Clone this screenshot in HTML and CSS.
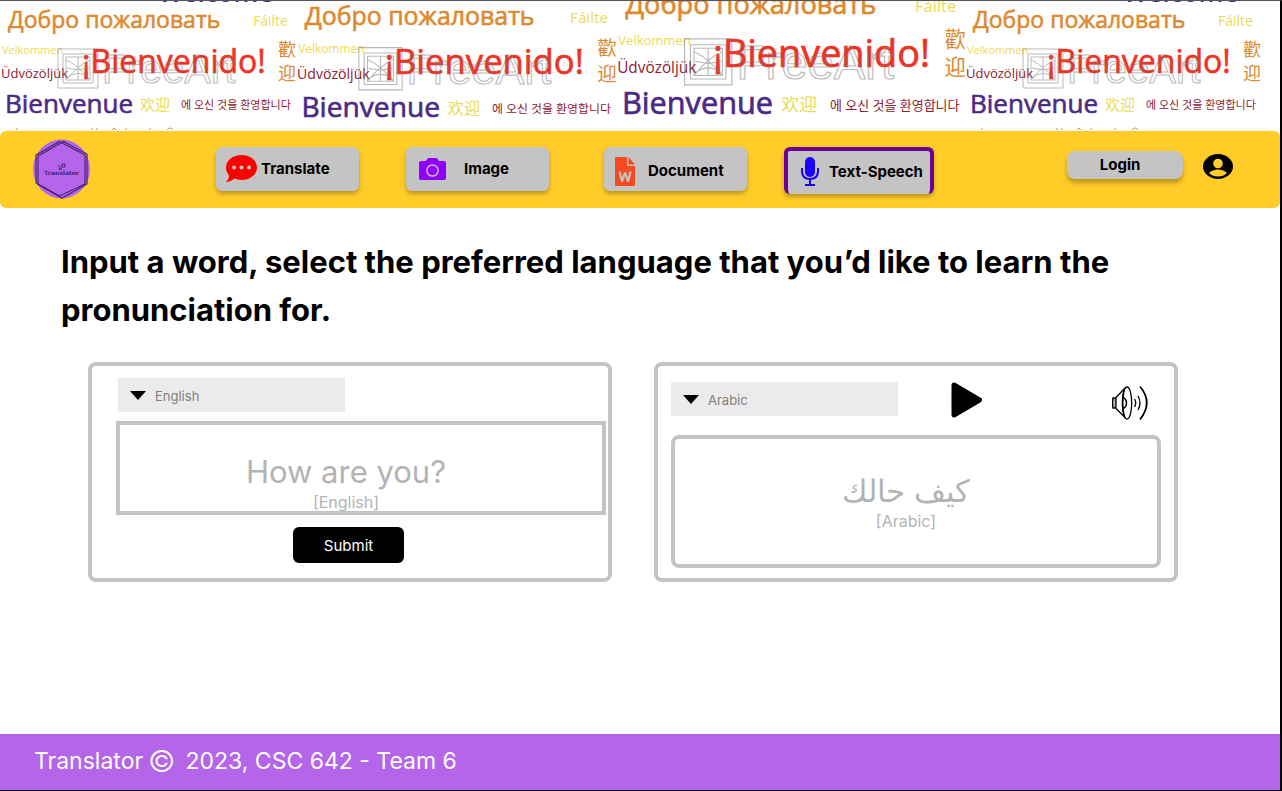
FILE: index.html
```html
<!DOCTYPE html>
<html lang="en">
<head>
<meta charset="utf-8">
<title>Translator - Text-Speech</title>
<link rel="stylesheet" href="styles.css">
<script src="banner.js" defer></script>
</head>
<body>
<div class="page">
  <div class="banner" aria-label="Welcome in many languages">
    <svg class="tile tile-a" viewBox="0 1 296 130" preserveAspectRatio="xMinYMin slice"></svg>
    <svg class="tile tile-b" viewBox="0 6 296 120" preserveAspectRatio="xMinYMin slice"></svg>
    <svg class="tile tile-c" viewBox="0 17 296 110" preserveAspectRatio="xMinYMin slice"></svg>
    <svg class="tile tile-d" viewBox="0 1 315 130" preserveAspectRatio="xMinYMin slice"></svg>
  </div>
  <template id="greetings">
    <svg>
      <text class="g purple strong" x="158" y="2" font-size="26">Welcome</text>
      <text class="g orange medium" x="8" y="28" font-size="23">Добро пожаловать</text>
      <text class="g yellow" x="253" y="26" font-size="14">Fáilte</text>
      <text class="g yellow" x="2" y="54" font-size="11">Velkommen</text>
      <text class="g maroon" x="1" y="78" font-size="13">Üdvözöljük</text>
      <text class="g red medium" x="82" y="73" font-size="32">¡Bienvenido!</text>
      <text class="g orange" x="278" y="56" font-size="18">歡</text>
      <text class="g orange" x="278" y="80" font-size="18">迎</text>
      <text class="g purple medium" x="5" y="113" font-size="26">Bienvenue</text>
      <text class="g yellow" x="140" y="110" font-size="15">欢迎</text>
      <text class="g maroon" x="181" y="109" font-size="11">에 오신 것을 환영합니다</text>
      <g class="mark">
        <path d="M58 49h40v39h-40zM63 54h30v29H63zM66 57h24v23H66z"/>
        <path d="M66 60q12 5 24 20M90 60Q78 65 66 80M67 68l11 2 11-2M78 57v23M68 77q10-7 20 0"/>
        <text x="102" y="83" font-size="40">FreeArt</text>
      </g>
      <path class="sliver" d="M16 129h2M91 129h2M96 129h2M112 130l2-2 2 2M127 128l-2 2M151 128l-2 2M167 130q4-4 6 0"/>
    </svg>
  </template>

  <header class="nav">
    <a class="logo" href="#" aria-label="Translator home">
      <svg width="58" height="60" viewBox="0 0 58 60">
        <ellipse cx="29.500" cy="30" rx="28.500" ry="29.500" fill="#b465ea"/>
        <g fill="none" stroke="#43206b" stroke-width="1.100">
          <path d="M27.500 2.500L53 16v29L27.500 57 4 44V16z"/>
          <path d="M31.500 2.500L55 15v30L30 59 6 45.500V17z"/>
        </g>
        <path d="M30 25h3v3h-3zM29 28l-2 3M26 27h2M27 30h3" stroke="#43206b" fill="none"/>
        <text x="29.500" y="36" font-size="6" font-weight="700" text-anchor="middle" font-family="DejaVu Serif, serif" fill="#43206b">Translator</text>
      </svg>
    </a>
    <nav class="tabs">
      <button class="tab translate">
        <svg width="31" height="28" viewBox="0 0 31 28"><path fill="#f00" d="M15.500 0C24 0 31 5.300 31 12.500S24 25 15.500 25c-2.500 0-5-.5-7-1.400C6 26 3 27 0 27c2-2 3-4 3-6.500C1 18 0 15.500 0 12.500 0 5.300 7 0 15.500 0z"/><g fill="#c4c4c4"><circle cx="8" cy="12.500" r="2"/><circle cx="15.500" cy="12.500" r="2"/><circle cx="23" cy="12.500" r="2"/></g></svg>
        <span>Translate</span>
      </button>
      <button class="tab image">
        <svg width="27" height="22" viewBox="0 0 27 22"><path fill="#9100ff" d="M2 3h5l1.500-2.200Q9 0 10 0h7q1 0 1.500.8L20 3h5q2 0 2 2v15q0 2-2 2H2q-2 0-2-2V5q0-2 2-2z"/><circle cx="13.500" cy="12.500" r="5.600" fill="none" stroke="#c4c4c4" stroke-width="1.500"/></svg>
        <span>Image</span>
      </button>
      <button class="tab document">
        <svg width="20" height="29" viewBox="0 0 20 29"><path fill="#f84a20" d="M1 0h11v8q0 1 1 1h7v19q0 1-1 1H1q-1 0-1-1V1q0-1 1-1zM13.500 0L20 7.500h-6.500z"/><path fill="none" stroke="#c4c4c4" stroke-width="2.200" stroke-linejoin="bevel" d="M4.500 14.500L7 24.500l3-9 3 9 2.500-10"/></svg>
        <span>Document</span>
      </button>
      <button class="tab speech" aria-current="page">
        <svg width="18" height="29" viewBox="0 0 18 29"><rect x="4" width="10" height="20" rx="5" fill="#1a00ff"/><path d="M1 11v3q0 8 8 8t8-8v-3M9 22v6M4 28h10" fill="none" stroke="#1a00ff" stroke-width="2"/></svg>
        <span>Text-Speech</span>
      </button>
    </nav>
    <div class="account">
      <button class="login">Login</button>
      <button class="profile" aria-label="Profile">
        <svg width="30" height="25" viewBox="0 0 30 25"><ellipse cx="15" cy="12.500" rx="15" ry="12.500"/><circle cx="15" cy="9.500" r="4.800" fill="#ffcc28"/><path fill="#ffcc28" d="M6 19q3.500-3.500 9-3.500t9 3.500q-3.500 3.500-9 3.500T6 19z"/></svg>
      </button>
    </div>
  </header>

  <main class="content">
    <h1>Input a word, select the preferred language that you’d like to learn the pronunciation for.</h1>
    <div class="cards">
      <form class="card source" onsubmit="return false">
        <div class="picker">
          <svg width="16" height="9" viewBox="0 0 16 9"><path d="M0 0h16L8 9z"/></svg>
          <select aria-label="Source language"><option>English</option></select>
        </div>
        <div class="entry">
          <input id="phrase" type="text" value="How are you?">
          <label for="phrase">[English]</label>
        </div>
        <button class="submit" type="submit">Submit</button>
      </form>
      <section class="card target">
        <div class="controls">
          <div class="picker">
            <svg width="16" height="9" viewBox="0 0 16 9"><path d="M0 0h16L8 9z"/></svg>
            <select aria-label="Target language"><option>Arabic</option></select>
          </div>
          <button class="play" aria-label="Play">
            <svg width="31" height="36" viewBox="0 0 31 36"><path d="M3 3l25.500 15L3 33z" stroke="#000" stroke-width="5" stroke-linejoin="round"/></svg>
          </button>
          <button class="volume" aria-label="Volume">
            <svg width="36" height="36" viewBox="0 0 36 36" fill="none" stroke="#000" stroke-width="1.300"><path d="M1 13h3v10H1q-1.200-5 0-10z" fill="#aaa"/><path d="M4 12.500L13 3M4 23.500L13.500 33"/><ellipse cx="15" cy="18" rx="4.700" ry="16"/><path d="M12 5q-2.500 13 0 26M10.500 12.500q4 1 4 5.500t-4 5.500" stroke-width="1.500"/><path d="M22.500 14q2.500 4 0 8M26 11q4 7 0 14"/><path d="M28 1.500q13.500 16 0 33" stroke-width="1.800"/></svg>
          </button>
        </div>
        <div class="result">
          <p class="translated" lang="ar" dir="rtl">كيف حالك</p>
          <p class="language">[Arabic]</p>
        </div>
      </section>
    </div>
  </main>

  <footer class="footer"><span>Translator</span><span class="copy">©</span><span>2023, CSC 642 - Team 6</span></footer>
</div>
</body>
</html>
```
FILE: banner.js
```js
// Repeat the greeting artwork in every tile of the banner.
const artwork = document.querySelector('#greetings').content.querySelector('svg');
document.querySelectorAll('.tile').forEach((tile) => {
  artwork.childNodes.forEach((node) => tile.append(node.cloneNode(true)));
});
```
FILE: styles.css
```css
* { box-sizing: border-box; }
body { margin: 0; background: #fff; color: #000; font-family: Inter, "Noto Sans", sans-serif; }
button, input, select { font: inherit; color: inherit; border: 0; padding: 0; margin: 0; background: none; }
button { cursor: pointer; }
svg { display: block; flex: none; }
.page {
  min-height: 100vh;
  display: flex;
  flex-direction: column;
  border-top: 1px solid #55555f;
  border-right: 2px solid #000;
  border-bottom: 1px solid #000;
}

.banner { display: flex; height: 130px; overflow: hidden; }
.tile { height: 130px; min-width: 0; overflow: visible; }
.tile-a { flex: 296 1 0; }
.tile-b { flex: 320 1 0; }
.tile-c { flex: 349 1 0; }
.tile-d { flex: 315 1 0; }
.g { font-family: "Open Sans", "Noto Sans", "Noto Sans CJK SC", "Noto Sans CJK KR", sans-serif; }
.medium { stroke-width: .6px; }
.strong { font-weight: 600; }
.purple { fill: #4b2a85; stroke: #4b2a85; }
.orange { fill: #dc8a32; stroke: #dc8a32; }
.yellow { fill: #eadb55; }
.maroon { fill: #8f2030; }
.red { fill: #f03224; stroke: #f03224; }
.g:not(.medium) { stroke: none; }
.mark { fill: none; stroke: #777; stroke-width: 1; opacity: .5; font-family: "Liberation Sans", Arial, sans-serif; }
.sliver { fill: none; stroke: #c98a50; stroke-width: 1; }

.nav { position: relative; height: 77px; display: flex; align-items: flex-start; padding: 8px 47px 0 32px; background: #ffcc28; border-radius: 6px; }
.tabs { display: flex; align-items: flex-start; margin: 8px 0 0 126px; }
.tab {
  display: flex;
  align-items: center;
  width: 143px;
  height: 44px;
  border-radius: 6px;
  background: #c4c4c4;
  font-size: 15px;
  line-height: 20px;
  font-weight: 700;
  box-shadow: 0 3px 4px rgba(0, 0, 0, .25);
}
.translate { padding-left: 10px; gap: 4px; }
.image { margin-left: 47px; padding-left: 13px; gap: 18px; }
.document { margin-left: 55px; padding: 4px 0 0 11px; gap: 13px; }
.speech { width: 150px; height: 47px; margin-left: 37px; padding: 0 0 2px 13px; gap: 10px; border: 4px solid #6a0098; border-bottom-width: 0; }
.account { display: flex; gap: 20px; margin: 12px 0 0 auto; }
.login { width: 116px; height: 28px; padding-right: 10px; border-radius: 8px; background: #c4c4c4; font-size: 15px; line-height: 20px; font-weight: 700; box-shadow: 0 4px 4px rgba(0, 0, 0, .25); }
.profile { height: 30px; }

.content { flex: 1; padding: 30px 102px 32px 61px; }
h1 { margin: 0; font-size: 31px; line-height: 48px; font-weight: 700; }
.cards { display: grid; grid-template-columns: 1fr 1fr; gap: 42px; margin: 28px 0 0 27px; }
.card { min-height: 220px; border: 4px solid #c4c4c4; border-radius: 8px; }
.source { display: flex; flex-direction: column; padding: 12px 2px 12px 24px; }
.target { padding: 16px 13px 10px; }
.picker { display: flex; align-items: center; gap: 9px; width: 227px; height: 34px; padding-left: 12px; background: #ebebeb; }
.picker select { flex: 1; height: 34px; appearance: none; padding-top: 2px; font-size: 13px; color: #7f7f7f; outline: 0; }
.source .picker { margin-left: 2px; }
.entry { display: flex; flex-direction: column; align-items: center; height: 94px; margin-top: 9px; padding: 27px 30px 0 0; border: 4px solid #c4c4c4; color: #b3b3b3; }
.entry input { width: 100%; height: 40px; text-align: center; font-size: 31px; line-height: 40px; outline: 0; }
.entry label, .language { font-size: 16px; line-height: 20px; }
.submit { align-self: center; width: 111px; height: 36px; margin: 12px 25px 0 0; border-radius: 6px; background: #000; color: #fff; font-size: 15px; }
.controls { display: flex; align-items: flex-start; }
.play { margin-left: 53px; }
.volume { margin: 3px 13px 0 auto; }
.result { display: flex; flex-direction: column; align-items: center; height: 133px; margin-top: 14px; padding: 32px 20px 0 0; border: 4px solid #c4c4c4; border-radius: 8px; color: #b3b3b3; }
.result p { margin: 0; }
.translated { font-size: 31px; line-height: 40px; }

.footer { display: flex; align-items: center; height: 56px; padding: 0 34px 2px; background: #b465ea; color: #fff; font-size: 23px; line-height: 32px; }
.copy { margin: 0 10px 0 5px; font-size: 30px; font-weight: 300; }
```
